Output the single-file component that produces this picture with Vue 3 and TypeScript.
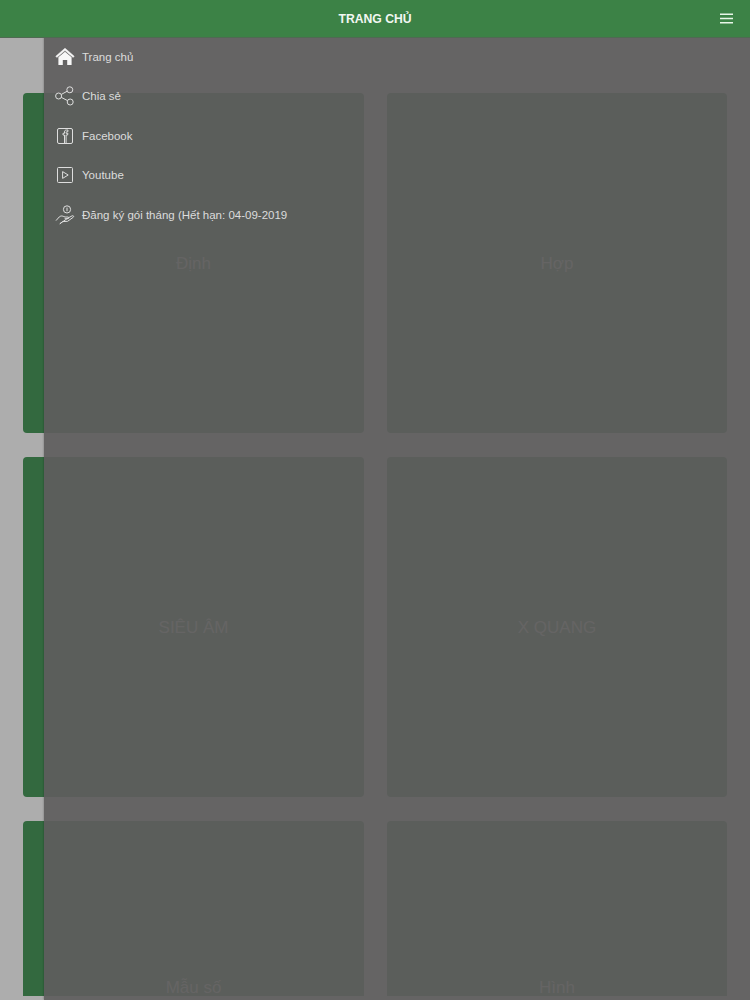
<script setup lang="ts">
interface MenuItem { label: string; icon: string }
const menu: MenuItem[] = [
  { label: 'Trang chủ', icon: 'home' },
  { label: 'Chia sẻ', icon: 'share' },
  { label: 'Facebook', icon: 'fb' },
  { label: 'Youtube', icon: 'yt' },
  { label: 'Đăng ký gói tháng (Hết hạn: 04-09-2019', icon: 'pay' },
]
const cards: string[] = ['Định', 'Hợp', 'SIÊU ÂM', 'X QUANG', 'Mẫu số', 'Hình']
</script>

<template>
  <div class="page">
    <header class="bar">
      <span class="title">TRANG CHỦ</span>
      <svg class="burger" viewBox="0 0 13 11" width="13" height="11">
        <path d="M0 1.2h13M0 5.5h13M0 9.8h13" stroke="#e8f6e8" stroke-width="1.5" />
      </svg>
    </header>
    <main class="grid">
      <div v-for="(c, i) in cards" :key="c" class="card" :class="{ cut: i >= 4 }"><span>{{ c }}</span></div>
    </main>
    <nav class="drawer">
      <a v-for="m in menu" :key="m.label" class="item">
        <svg class="ico" viewBox="0 0 20 20" width="20" height="20" fill="none" stroke="#dedede" stroke-width="1">
          <template v-if="m.icon === 'home'">
            <path d="M0.8 9.2 10 1.2l9.2 8-1 1.2L10 3.6 1.8 10.4z" fill="#f7f7f7" stroke="#f7f7f7" stroke-width="0.5" />
            <path d="M3.4 10.2 10 4.8l6.6 5.4v7.8h-4.4v-5h-4.4v5H3.4z" fill="#f7f7f7" stroke="none" />
          </template>
          <template v-else-if="m.icon === 'share'">
            <circle cx="3.6" cy="10" r="3" />
            <circle cx="14.8" cy="3.8" r="3" />
            <circle cx="15.2" cy="16" r="3" />
            <path d="M6.2 8.5 12.2 5.2M6.3 11.4l6.2 3.2" />
          </template>
          <template v-else-if="m.icon === 'fb'">
            <rect x="2.5" y="2.5" width="15" height="15" rx="1.5" />
            <path d="M9.5 17.5V9H8V7.3h1.5V6c0-1.4.8-2 2-2h1.4v1.7h-1c-.6 0-.8.2-.8.8v.8h1.8L12.6 9h-1.5v8.5" />
          </template>
          <template v-else-if="m.icon === 'yt'">
            <rect x="2.5" y="2.5" width="15" height="15" rx="1" />
            <path d="M7.6 6.6v6.8l5.6-3.4z" />
          </template>
          <template v-else>
            <circle cx="12" cy="4.4" r="3.6" />
            <path d="M12 2.6v3.6" />
            <path d="M1 15.6l3.2-3.6c1.2-1.1 2.6-1.3 4-.7l1.8.7h3c1 0 1 1.7 0 1.7H9.6M13 13l4.2-2.2c1.2-.6 2 .7 1 1.5l-5.6 4-5 .3-2.8 2.2z" />
          </template>
        </svg>
        <span>{{ m.label }}</span>
      </a>
    </nav>
  </div>
</template>

<style>
html, body { margin: 0; background: #adadad; }
</style>

<style scoped>
.page {
  position: relative;
  width: 750px;
  height: 1000px;
  overflow: hidden;
  background: #adadad;
  font-family: "Liberation Sans", Arial, sans-serif;
}
.bar {
  height: 37px;
  background: #3c8246;
  box-shadow: 0 1px 0 #4f6a52;
  display: flex;
  align-items: center;
  justify-content: center;
  position: relative;
  z-index: 2;
}
.title {
  color: #f2f7f2;
  font-size: 12.2px;
  font-weight: 700;
}
.burger { position: absolute; right: 17px; top: 13px; }
.grid {
  display: grid;
  grid-template-columns: 341px 340px;
  grid-template-rows: 340px 340px 175px;
  column-gap: 23px;
  row-gap: 24px;
  padding: 56px 0 0 23px;
}
.card {
  background: #33693f;
  border-radius: 4px;
  display: flex;
  align-items: center;
  justify-content: center;
  color: #b4b4b0;
  font-size: 17px;
  line-height: 17px;
}
.card.cut {
  align-items: flex-end;
  border-radius: 4px 4px 0 0;
}
.drawer {
  position: absolute;
  left: 44px;
  top: 37px;
  right: 0;
  bottom: 0;
  background: rgba(94, 93, 93, 0.92);
  box-shadow: 0 0 2px rgba(0, 0, 0, 0.35);
  display: flex;
  flex-direction: column;
  z-index: 1;
}
.item {
  display: flex;
  align-items: center;
  height: 39.5px;
  padding-left: 11px;
  gap: 7px;
  color: #dcdcdc;
  font-size: 11.5px;
}
.ico { flex: none; }
</style>
